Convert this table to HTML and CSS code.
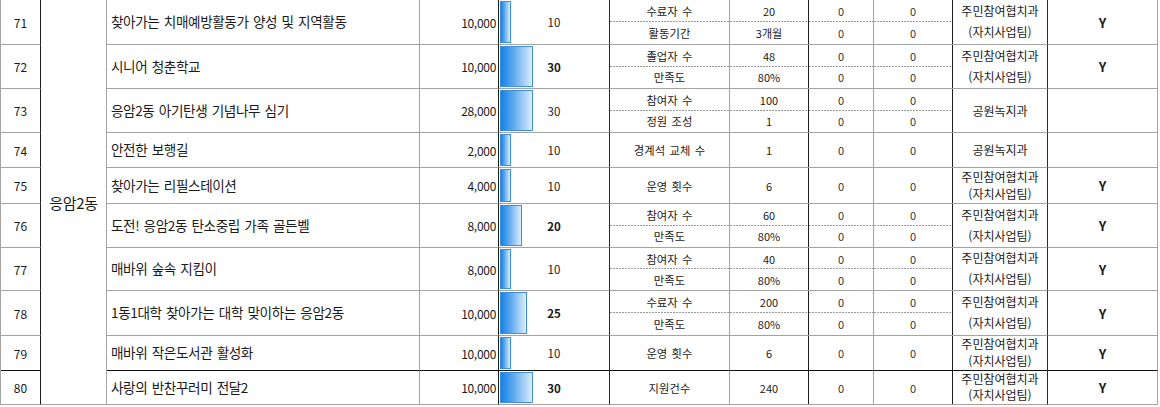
FILE: index.html
```html
<!DOCTYPE html>
<html lang="ko">
<head>
<meta charset="utf-8">
<title>응암2동 사업 목록</title>
<link rel="stylesheet" href="styles.css">
</head>
<body>
<div class="sheet">
  <div class="dong">응암2동</div>

  <div class="row">
    <div class="c no">71</div>
    <div class="c name">찾아가는 치매예방활동가 양성 및 지역활동</div>
    <div class="c budget">10,000</div>
    <div class="c score"><span class="bar" style="width:11px"></span><span class="val">10</span></div>
    <div class="c kpi two">
      <div class="sub"><span class="k">수료자 수</span><span class="t">20</span><span class="z">0</span><span class="z last">0</span></div>
      <div class="sub"><span class="k">활동기간</span><span class="t">3개월</span><span class="z">0</span><span class="z last">0</span></div>
    </div>
    <div class="c dept dual"><span>주민참여협치과</span><span>(자치사업팀)</span></div>
    <div class="c yn">Y</div>
  </div>

  <div class="row">
    <div class="c no">72</div>
    <div class="c name">시니어 청춘학교</div>
    <div class="c budget">10,000</div>
    <div class="c score"><span class="bar" style="width:33px"></span><span class="val strong">30</span></div>
    <div class="c kpi two">
      <div class="sub"><span class="k">졸업자 수</span><span class="t">48</span><span class="z">0</span><span class="z last">0</span></div>
      <div class="sub"><span class="k">만족도</span><span class="t">80%</span><span class="z">0</span><span class="z last">0</span></div>
    </div>
    <div class="c dept dual"><span>주민참여협치과</span><span>(자치사업팀)</span></div>
    <div class="c yn">Y</div>
  </div>

  <div class="row">
    <div class="c no">73</div>
    <div class="c name">응암2동 아기탄생 기념나무 심기</div>
    <div class="c budget">28,000</div>
    <div class="c score"><span class="bar" style="width:33px"></span><span class="val">30</span></div>
    <div class="c kpi two">
      <div class="sub"><span class="k">참여자 수</span><span class="t">100</span><span class="z">0</span><span class="z last">0</span></div>
      <div class="sub"><span class="k">정원 조성</span><span class="t">1</span><span class="z">0</span><span class="z last">0</span></div>
    </div>
    <div class="c dept"><span>공원녹지과</span></div>
    <div class="c yn"></div>
  </div>

  <div class="row">
    <div class="c no">74</div>
    <div class="c name">안전한 보행길</div>
    <div class="c budget">2,000</div>
    <div class="c score"><span class="bar" style="width:11px"></span><span class="val">10</span></div>
    <div class="c kpi">
      <div class="sub"><span class="k">경계석 교체 수</span><span class="t">1</span><span class="z">0</span><span class="z last">0</span></div>
    </div>
    <div class="c dept"><span>공원녹지과</span></div>
    <div class="c yn"></div>
  </div>

  <div class="row">
    <div class="c no">75</div>
    <div class="c name">찾아가는 리필스테이션</div>
    <div class="c budget">4,000</div>
    <div class="c score"><span class="bar" style="width:11px"></span><span class="val">10</span></div>
    <div class="c kpi">
      <div class="sub"><span class="k">운영 횟수</span><span class="t">6</span><span class="z">0</span><span class="z last">0</span></div>
    </div>
    <div class="c dept dual"><span>주민참여협치과</span><span>(자치사업팀)</span></div>
    <div class="c yn">Y</div>
  </div>

  <div class="row">
    <div class="c no">76</div>
    <div class="c name">도전! 응암2동 탄소중립 가족 골든벨</div>
    <div class="c budget">8,000</div>
    <div class="c score"><span class="bar" style="width:22px"></span><span class="val strong">20</span></div>
    <div class="c kpi two">
      <div class="sub"><span class="k">참여자 수</span><span class="t">60</span><span class="z">0</span><span class="z last">0</span></div>
      <div class="sub"><span class="k">만족도</span><span class="t">80%</span><span class="z">0</span><span class="z last">0</span></div>
    </div>
    <div class="c dept dual"><span>주민참여협치과</span><span>(자치사업팀)</span></div>
    <div class="c yn">Y</div>
  </div>

  <div class="row">
    <div class="c no">77</div>
    <div class="c name">매바위 숲속 지킴이</div>
    <div class="c budget">8,000</div>
    <div class="c score"><span class="bar" style="width:11px"></span><span class="val">10</span></div>
    <div class="c kpi two">
      <div class="sub"><span class="k">참여자 수</span><span class="t">40</span><span class="z">0</span><span class="z last">0</span></div>
      <div class="sub"><span class="k">만족도</span><span class="t">80%</span><span class="z">0</span><span class="z last">0</span></div>
    </div>
    <div class="c dept dual"><span>주민참여협치과</span><span>(자치사업팀)</span></div>
    <div class="c yn">Y</div>
  </div>

  <div class="row">
    <div class="c no">78</div>
    <div class="c name">1동1대학 찾아가는 대학 맞이하는 응암2동</div>
    <div class="c budget">10,000</div>
    <div class="c score"><span class="bar" style="width:27px"></span><span class="val strong">25</span></div>
    <div class="c kpi two">
      <div class="sub"><span class="k">수료자 수</span><span class="t">200</span><span class="z">0</span><span class="z last">0</span></div>
      <div class="sub"><span class="k">만족도</span><span class="t">80%</span><span class="z">0</span><span class="z last">0</span></div>
    </div>
    <div class="c dept dual"><span>주민참여협치과</span><span>(자치사업팀)</span></div>
    <div class="c yn">Y</div>
  </div>

  <div class="row heavy">
    <div class="c no">79</div>
    <div class="c name">매바위 작은도서관 활성화</div>
    <div class="c budget">10,000</div>
    <div class="c score"><span class="bar" style="width:11px"></span><span class="val">10</span></div>
    <div class="c kpi">
      <div class="sub"><span class="k">운영 횟수</span><span class="t">6</span><span class="z">0</span><span class="z last">0</span></div>
    </div>
    <div class="c dept dual"><span>주민참여협치과</span><span>(자치사업팀)</span></div>
    <div class="c yn">Y</div>
  </div>

  <div class="row">
    <div class="c no">80</div>
    <div class="c name">사랑의 반찬꾸러미 전달2</div>
    <div class="c budget">10,000</div>
    <div class="c score"><span class="bar" style="width:33px"></span><span class="val strong">30</span></div>
    <div class="c kpi">
      <div class="sub"><span class="k">지원건수</span><span class="t">240</span><span class="z">0</span><span class="z last">0</span></div>
    </div>
    <div class="c dept dual"><span>주민참여협치과</span><span>(자치사업팀)</span></div>
    <div class="c yn">Y</div>
  </div>
</div>
</body>
</html>
```

FILE: styles.css
```css
html, body {
  margin: 0;
  padding: 0;
  background: #ffffff;
}

body {
  font-family: "Noto Sans CJK KR", "Noto Sans", sans-serif;
  color: #1a1a1a;
  width: 1160px;
  height: 407px;
  overflow: hidden;
}

.sheet {
  display: grid;
  grid-template-columns: 40px 66px 313px 79px 111px 343px 95px 110px;
  grid-template-rows: 45px 44px 44px 35px 36px 44px 43px 45px 35px 34px;
  width: 1158px;
  border-left: 1px solid #a3a3a3;
}

.row {
  display: contents;
}

.c {
  box-sizing: border-box;
  border-right: 1px solid #a3a3a3;
  border-bottom: 1px solid #a3a3a3;
  display: flex;
  align-items: center;
  min-width: 0;
  overflow: hidden;
}

.dong {
  grid-column: 2;
  grid-row: 1 / -1;
  box-sizing: border-box;
  border-right: 1px solid #a3a3a3;
  border-bottom: 1px solid #a3a3a3;
  display: flex;
  align-items: center;
  justify-content: center;
  font-size: 15px;
  letter-spacing: -0.3px;
}

.no {
  justify-content: center;
  font-size: 12px;
  border-right-color: #1e1e1e;
}

.name {
  padding-left: 4px;
  font-size: 13.6px;
  letter-spacing: -0.4px;
  word-spacing: 1px;
  white-space: nowrap;
  padding-bottom: 2px;
}

.budget {
  justify-content: flex-end;
  padding-right: 2px;
  font-size: 12px;
  letter-spacing: -0.3px;
  border-right-color: #1e1e1e;
}

.score {
  position: relative;
  justify-content: center;
  font-size: 11.5px;
  border-right-color: #2a2a2a;
}

.bar {
  position: absolute;
  left: 1px;
  top: 1px;
  bottom: 1px;
  box-sizing: border-box;
  border: 1px solid #3d8edb;
  background: linear-gradient(to right, #1482e8 0%, #5ea9ef 40%, #dcedfc 100%);
}

.val {
  position: relative;
}

.val.strong {
  font-weight: 700;
}

.kpi {
  border-right: none;
  display: grid;
  grid-template-columns: 120px 79px 65px 79px;
  grid-auto-rows: 1fr;
  align-items: stretch;
}

.sub {
  display: contents;
}

.sub > span {
  box-sizing: border-box;
  display: flex;
  align-items: center;
  justify-content: center;
  border-right: 1px solid #a3a3a3;
  font-size: 11px;
  white-space: nowrap;
}

.sub .k {
  font-size: 11.3px;
  letter-spacing: 0.1px;
  word-spacing: 1px;
}

.sub .t {
  border-right-color: #1e1e1e;
}

.sub .z {
  color: #333333;
}

.sub .z.last {
  border-right-color: #1e1e1e;
}

.kpi.two .sub:first-child > span {
  background: linear-gradient(to right, #9a9a9a 0 2px, transparent 2px 3px) left bottom / 3px 1px repeat-x;
}

.dept {
  justify-content: center;
  font-size: 12px;
  line-height: 14px;
  border-right-color: #2a2a2a;
  white-space: nowrap;
}

.dept.dual {
  display: grid;
  grid-template-rows: 1fr 1fr;
  justify-items: center;
  align-items: center;
  padding: 0 0 1px;
}

.yn {
  justify-content: center;
  font-size: 13px;
  font-weight: 700;
}

.row.heavy > .c {
  border-bottom-color: #111111;
}
```
